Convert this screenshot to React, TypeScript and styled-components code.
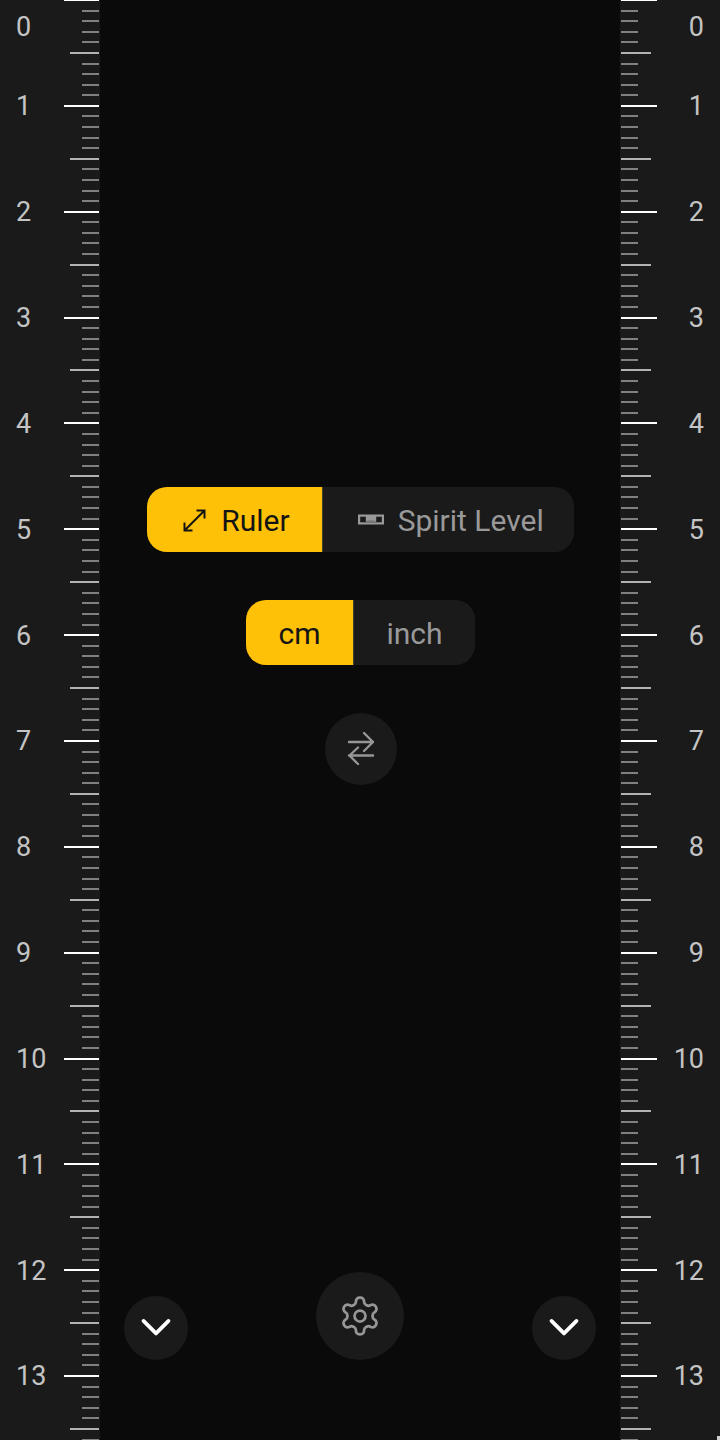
import React from "react";
import styled, { createGlobalStyle } from "styled-components";

const TICK_STEP = 10.585;
const TICK_COUNT = 137;
const CM_COUNT = 14;

type Side = "left" | "right";

const GlobalStyle = createGlobalStyle`
  html, body {
    margin: 0;
    padding: 0;
    background: #0a0a0a;
  }
  body {
    font-family: Roboto, "Noto Sans", sans-serif;
  }
`;

const Page = styled.div`
  position: relative;
  display: flex;
  width: 720px;
  height: 1440px;
  overflow: hidden;
  background: #0a0a0a;
`;

const CornerMark = styled.div`
  position: absolute;
  right: 0;
  bottom: 0;
  width: 3px;
  height: 4px;
  background: #d0d0d0;
`;

const Strip = styled.div<{ $side: Side }>`
  display: flex;
  flex-direction: ${(p) => (p.$side === "left" ? "row" : "row-reverse")};
  justify-content: space-between;
  flex: 0 0 100px;
  height: 1440px;
  overflow: hidden;
  background: #1a1a1a;
`;

const Labels = styled.div<{ $side: Side }>`
  display: flex;
  flex-direction: column;
  align-items: ${(p) => (p.$side === "left" ? "flex-start" : "flex-end")};
  padding-top: 0.5px;
  ${(p) => (p.$side === "left" ? "padding-left: 16px;" : "padding-right: 16px;")}
`;

const CmLabel = styled.div<{ $first: boolean }>`
  display: flex;
  align-items: center;
  flex: none;
  height: ${(p) => (p.$first ? TICK_STEP * 5 : TICK_STEP * 10)}px;
  font-size: 27px;
  color: #c4c4c4;
`;

const Ticks = styled.div<{ $side: Side }>`
  display: flex;
  flex-direction: column;
  align-items: ${(p) => (p.$side === "left" ? "flex-end" : "flex-start")};
  margin-top: -1px;
  ${(p) => (p.$side === "left" ? "padding-right: 1px;" : "padding-left: 1px;")}
`;

const TickSlot = styled.div`
  flex: none;
`;

const Tick = styled.div<{ $kind: "major" | "mid" | "minor"; $side: Side }>`
  height: 2px;
  width: ${(p) =>
    p.$kind === "major" ? (p.$side === "left" ? 35 : 36) : p.$kind === "mid" ? (p.$side === "left" ? 29 : 30) : 17}px;
  background: ${(p) => (p.$kind === "major" ? "#ffffff" : p.$kind === "mid" ? "#b3b3b3" : "#808080")};
`;

const Center = styled.main`
  display: flex;
  flex: 1;
  flex-direction: column;
  align-items: center;
  padding: 487px 24px 80px;
  box-sizing: border-box;
`;

const Segmented = styled.div`
  display: flex;
  height: 65px;
  margin: 0 0 48px 1px;
  border-radius: 20px;
  overflow: hidden;
  background: #1a1a1a;
`;

const Segment = styled.div<{ $active?: boolean; $withIcon?: boolean }>`
  display: flex;
  align-items: center;
  gap: ${(p) => (p.$active ? 12 : 13)}px;
  padding: 0 ${(p) => (p.$active ? (p.$withIcon ? 32 : 33) : p.$withIcon ? 30 : 32)}px 0 32px;
  font-size: 30px;
  color: ${(p) => (p.$active ? "#141414" : "#999999")};
  background: ${(p) => (p.$active ? "#ffc107" : "#1a1a1a")};
  ${(p) => (p.$active ? "border-right: 1px solid #44422a;" : "")}
`;

const SegmentLabel = styled.span`
  padding-top: 2px;
`;

const SwapButton = styled.div`
  display: flex;
  align-items: center;
  justify-content: center;
  width: 72px;
  height: 72px;
  margin-left: 2px;
  border-radius: 50%;
  background: #1a1a1a;
`;

const BottomBar = styled.div`
  display: flex;
  align-items: flex-end;
  justify-content: space-between;
  width: 100%;
  margin-top: auto;
`;

const RoundButton = styled.div<{ $size: number }>`
  display: flex;
  align-items: center;
  justify-content: center;
  width: ${(p) => p.$size}px;
  height: ${(p) => p.$size}px;
  border-radius: 50%;
  background: #1a1a1a;
`;

const ResizeIcon = () => (
  <svg width="30" height="30" viewBox="0 0 30 30" fill="none" stroke="#141414" strokeWidth="2">
    <path d="M5.5 25.5 25.5 5.5M17.5 5.5h8v8M5.5 17.5v8h8" />
  </svg>
);

const LevelIcon = () => (
  <svg width="30" height="30" viewBox="0 0 30 30" fill="none" stroke="#999999" strokeWidth="2.2">
    <rect x="4.1" y="10.6" width="23.8" height="7.8" />
    <path d="M11.5 11v4.4h9V11" fill="#999999" stroke="none" />
    <path d="M11.5 11v5h9v-5" strokeWidth="1.4" />
  </svg>
);

const SwapIcon = () => (
  <svg width="28" height="36" viewBox="0 0 28 36" fill="none" stroke="#969696" strokeWidth="2.4" strokeLinecap="round" strokeLinejoin="round">
    <path d="M2 11h24M17 2l9 9-9 9" />
    <path d="M26 24.5H2M11 16.5l-8.5 8 8.5 8.5" />
  </svg>
);

const ChevronIcon = () => (
  <svg width="50" height="50" viewBox="0 0 24 24" fill="none" stroke="#ffffff" strokeWidth="1.8" strokeLinecap="round" strokeLinejoin="round">
    <path d="m6 8.6 6 6 6-6" />
  </svg>
);

const GearIcon = () => (
  <svg width="44" height="44" viewBox="0 0 24 24" fill="none" stroke="#969696" strokeWidth="1.5" strokeLinecap="round" strokeLinejoin="round">
    <path d="M12.22 2h-.44a2 2 0 0 0-2 2v.18a2 2 0 0 1-1 1.73l-.43.25a2 2 0 0 1-2 0l-.15-.08a2 2 0 0 0-2.73.73l-.22.38a2 2 0 0 0 .73 2.73l.15.1a2 2 0 0 1 1 1.72v.51a2 2 0 0 1-1 1.74l-.15.09a2 2 0 0 0-.73 2.73l.22.38a2 2 0 0 0 2.73.73l.15-.08a2 2 0 0 1 2 0l.43.25a2 2 0 0 1 1 1.73V20a2 2 0 0 0 2 2h.44a2 2 0 0 0 2-2v-.18a2 2 0 0 1 1-1.73l.43-.25a2 2 0 0 1 2 0l.15.08a2 2 0 0 0 2.73-.73l.22-.39a2 2 0 0 0-.73-2.73l-.15-.08a2 2 0 0 1-1-1.74v-.5a2 2 0 0 1 1-1.74l.15-.09a2 2 0 0 0 .73-2.73l-.22-.38a2 2 0 0 0-2.73-.73l-.15.08a2 2 0 0 1-2 0l-.43-.25a2 2 0 0 1-1-1.73V4a2 2 0 0 0-2-2z" />
    <circle cx="12" cy="12" r="3" />
  </svg>
);

// slot heights are whole pixels so every tick lands on the same row as the device drew it
const tickTop = (i: number) => Math.round(i * TICK_STEP);

const Ruler = ({ side }: { side: Side }) => (
  <Strip $side={side}>
    <Labels $side={side}>
      {Array.from({ length: CM_COUNT }, (_, i) => (
        <CmLabel key={i} $first={i === 0}>
          {i}
        </CmLabel>
      ))}
    </Labels>
    <Ticks $side={side}>
      {Array.from({ length: TICK_COUNT }, (_, i) => (
        <TickSlot key={i} style={{ height: tickTop(i + 1) - tickTop(i) }}>
          <Tick $side={side} $kind={i % 10 === 0 ? "major" : i % 5 === 0 ? "mid" : "minor"} />
        </TickSlot>
      ))}
    </Ticks>
  </Strip>
);

export default function App() {
  return (
    <Page>
      <GlobalStyle />
      <Ruler side="left" />
      <Center>
        <Segmented>
          <Segment $active $withIcon>
            <ResizeIcon />
            <SegmentLabel>Ruler</SegmentLabel>
          </Segment>
          <Segment $withIcon>
            <LevelIcon />
            <SegmentLabel>Spirit Level</SegmentLabel>
          </Segment>
        </Segmented>
        <Segmented>
          <Segment $active>
            <SegmentLabel>cm</SegmentLabel>
          </Segment>
          <Segment>
            <SegmentLabel>inch</SegmentLabel>
          </Segment>
        </Segmented>
        <SwapButton>
          <SwapIcon />
        </SwapButton>
        <BottomBar>
          <RoundButton $size={64}>
            <ChevronIcon />
          </RoundButton>
          <RoundButton $size={88}>
            <GearIcon />
          </RoundButton>
          <RoundButton $size={64}>
            <ChevronIcon />
          </RoundButton>
        </BottomBar>
      </Center>
      <Ruler side="right" />
      <CornerMark />
    </Page>
  );
}
